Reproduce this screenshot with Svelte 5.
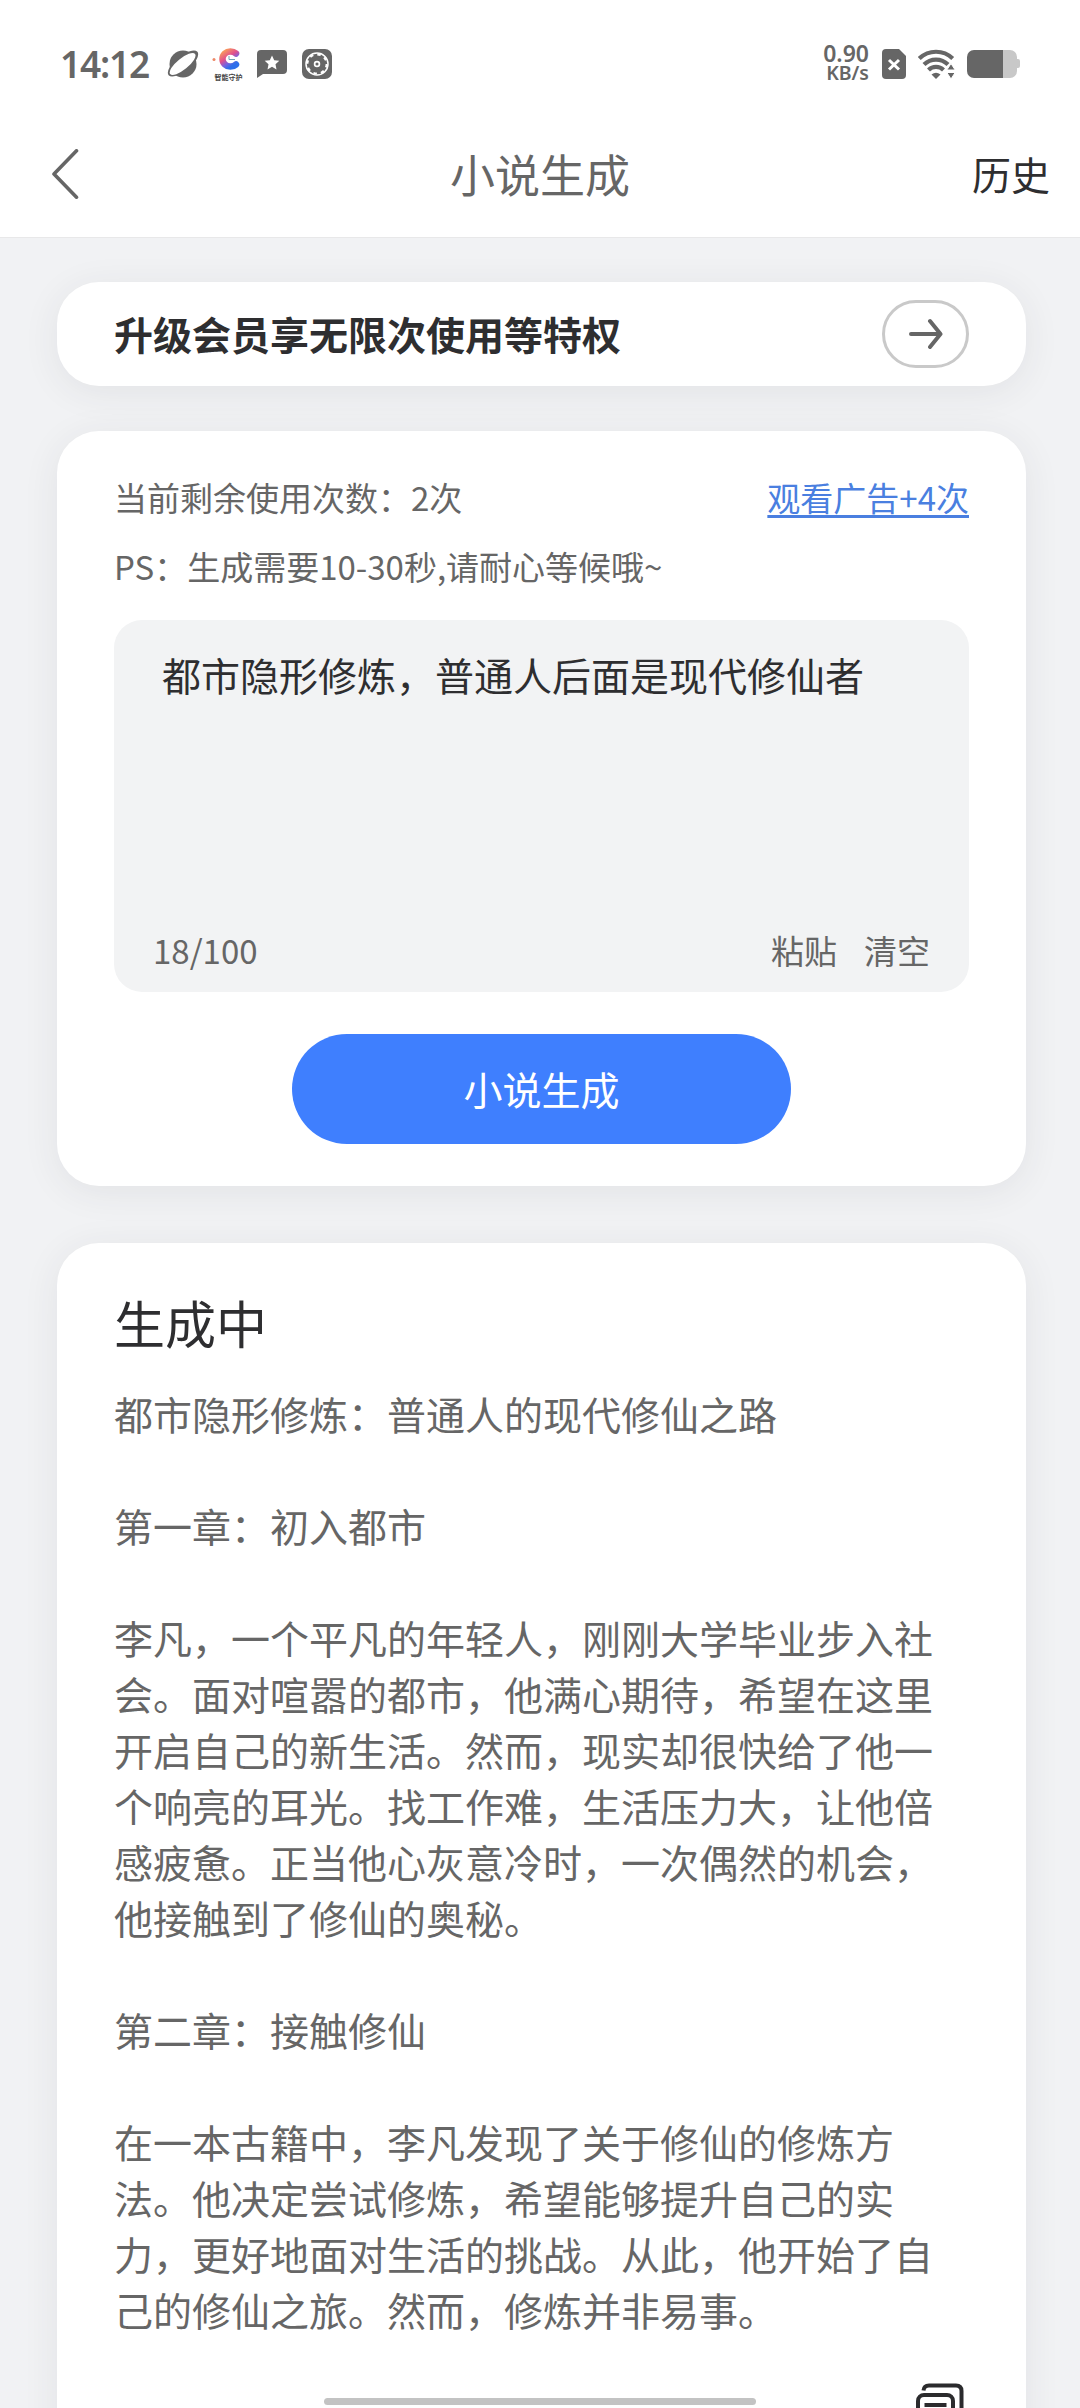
<script>
  let prompt = '都市隐形修炼，普通人后面是现代修仙者';
  let remaining = 2;
  const maxLength = 100;

  const story = [
    '都市隐形修炼：普通人的现代修仙之路',
    '第一章：初入都市',
    '李凡，一个平凡的年轻人，刚刚大学毕业步入社会。面对喧嚣的都市，他满心期待，希望在这里开启自己的新生活。然而，现实却很快给了他一个响亮的耳光。找工作难，生活压力大，让他倍感疲惫。正当他心灰意冷时，一次偶然的机会，他接触到了修仙的奥秘。',
    '第二章：接触修仙',
    '在一本古籍中，李凡发现了关于修仙的修炼方法。他决定尝试修炼，希望能够提升自己的实力，更好地面对生活的挑战。从此，他开始了自己的修仙之旅。然而，修炼并非易事。'
  ];

  const clearPrompt = () => {
    prompt = '';
  };
</script>

<div class="screen">
  <div class="status-bar">
    <div class="status-left">
      <span class="clock">14:12</span>
      <svg class="planet" width="32" height="30" viewBox="0 0 32 30">
        <circle cx="16" cy="15" r="13.500" fill="#666" />
        <ellipse cx="16" cy="14.500" rx="18.500" ry="7.500" transform="rotate(-39 16 14.500)" fill="#666" />
        <ellipse cx="15.600" cy="15" rx="16" ry="5.600" transform="rotate(-39 15.600 15)" fill="#fff" />
      </svg>
      <svg class="guard" width="32" height="34" viewBox="0 0 32 34">
        <defs>
          <linearGradient id="guardFill" x1="0" y1="0" x2="0.6" y2="1">
            <stop offset="0" stop-color="#f99a5c" />
            <stop offset="0.45" stop-color="#e2508c" />
            <stop offset="0.75" stop-color="#7a62dd" />
            <stop offset="1" stop-color="#2f6fea" />
          </linearGradient>
        </defs>
        <path d="M24 6.500A8 7.600 0 1 0 24 17.500" fill="none" stroke="url(#guardFill)" stroke-width="6.500" stroke-linecap="round" />
        <path d="M17 9v3.500h6" fill="none" stroke="#6fa3b5" stroke-width="1" />
        <circle cx="2" cy="12.500" r="1.500" fill="#ee8866" />
        <text x="2.500" y="32.500" textLength="28" lengthAdjust="spacingAndGlyphs">智能守护</text>
      </svg>
      <svg class="chat" width="30" height="28" viewBox="0 0 30 28">
        <path d="M4 0h22a4 4 0 0 1 4 4v16a4 4 0 0 1-4 4H6l-6 4V4a4 4 0 0 1 4-4z" fill="#666" />
        <path d="M15 5.500l2.200 4.700 5.100.6-3.800 3.500 1 5.100-4.500-2.600-4.500 2.600 1-5.100-3.800-3.500 5.100-.6z" fill="#fff" />
      </svg>
      <svg class="gear" width="30" height="30" viewBox="0 0 30 30">
        <rect width="30" height="30" rx="7" fill="#666" />
        <circle cx="15" cy="15" r="11" fill="none" stroke="#fff" stroke-width="1.500" />
        <circle cx="15" cy="15" r="9.600" fill="none" stroke="#fff" stroke-width="2" stroke-dasharray="3.500 4.040" />
        <circle cx="15" cy="15" r="2.400" fill="none" stroke="#fff" stroke-width="1.700" />
      </svg>
    </div>
    <div class="status-right">
      <div class="speed"><span class="rate">0.90</span><span class="unit">KB/s</span></div>
      <svg class="sim" width="24" height="30" viewBox="0 0 24 30">
        <path d="M4 0h13l7 7v19a4 4 0 0 1-4 4H4a4 4 0 0 1-4-4V4a4 4 0 0 1 4-4z" fill="#666" />
        <path d="M7 11l10 9.500M17 11l-10 9.500" stroke="#fff" stroke-width="3" />
      </svg>
      <svg class="wifi" width="38" height="30" viewBox="0 0 38 30">
        <g fill="none" stroke="#666" stroke-width="4.200">
          <path d="M1.300 9.500a24 24 0 0 1 33.400 0" />
          <path d="M6 15.500a17 17 0 0 1 24 0" />
          <path d="M10.500 21a10.800 10.800 0 0 1 15 0" />
        </g>
        <path d="M13.500 25.500q4.500-3.500 9 0L18 30z" fill="#666" />
        <path d="M33 14.500l4.200 6.500h-8.400zM33 30l4.200-6.500h-8.400z" fill="#666" stroke="#fff" stroke-width="1" />
      </svg>
      <svg class="battery" width="53" height="28" viewBox="0 0 53 28">
        <path d="M35 0h8a7 7 0 0 1 7 7v2h1a2 2 0 0 1 2 2v5a2 2 0 0 1-2 2h-1v3a7 7 0 0 1-7 7h-8z" fill="#c8c8c8" />
        <path d="M7 0h29v28H7a7 7 0 0 1-7-7V7a7 7 0 0 1 7-7z" fill="#666" />
      </svg>
    </div>
  </div>

  <header class="nav">
    <button class="back" aria-label="返回">
      <svg width="28" height="50" viewBox="0 0 28 50">
        <path d="M25.500 1.800L3 25l22.500 23.200" fill="none" stroke="#666" stroke-width="3.600" stroke-linecap="round" stroke-linejoin="round" />
      </svg>
    </button>
    <h1>小说生成</h1>
    <button class="history">历史</button>
  </header>

  <main>
    <section class="card vip">
      <span class="vip-text">升级会员享无限次使用等特权</span>
      <span class="vip-arrow">
        <svg width="34" height="32" viewBox="0 0 34 32">
          <path d="M2 16h29M21 3l10.500 13L21 29" fill="none" stroke="#666" stroke-width="4" stroke-linecap="round" stroke-linejoin="round" />
        </svg>
      </span>
    </section>

    <section class="card generator">
      <div class="quota">
        <span>当前剩余使用次数：{remaining}次</span>
        <span class="watch-ad">观看广告+4次</span>
      </div>
      <p class="hint">PS：生成需要10-30秒,请耐心等候哦~</p>
      <div class="prompt-box">
        <p class="prompt-text">{prompt}</p>
        <div class="prompt-footer">
          <span>{prompt.length}/{maxLength}</span>
          <div class="prompt-actions">
            <button>粘贴</button>
            <button on:click={clearPrompt}>清空</button>
          </div>
        </div>
      </div>
      <button class="generate">小说生成</button>
    </section>

    <section class="card result">
      <h2>生成中</h2>
      <div class="story">
        {#each story as paragraph}
          <p>{paragraph}</p>
        {/each}
      </div>
      <svg class="copy" width="48" height="54" viewBox="0 0 48 54">
        <g fill="none" stroke="#2b2b2d" stroke-width="4">
          <path d="M7.500 7.500Q8 2.500 13 2.500h27q5.500 0 5.500 5.500v33" />
          <rect x="2" y="12" width="35" height="40" rx="6" />
          <path d="M8.500 22h22" />
        </g>
      </svg>
    </section>
  </main>

  <div class="home-indicator"></div>
</div>

<style>
:global(body) {
  margin: 0;
  overflow: hidden;
}

.screen {
  position: relative;
  width: 1080px;
  height: 2408px;
  overflow: hidden;
  display: flex;
  flex-direction: column;
  background-color: #f1f2f4;
  color: #666;
  font-family: 'Noto Sans CJK SC', sans-serif;
}

h1, h2, p {
  margin: 0;
  font-weight: 400;
}

button {
  border: none;
  padding: 0;
  background: none;
  color: inherit;
  font: inherit;
}

svg {
  display: block;
  flex: none;
}

.status-bar {
  flex: none;
  height: 112px;
  padding: 16px 60px 0 60px;
  box-sizing: border-box;
  background-color: #fff;
  display: flex;
  justify-content: space-between;
  align-items: center;
}

.status-left, .status-right {
  display: flex;
  align-items: center;
}

.clock {
  width: 107px;
  font-family: 'Noto Sans', sans-serif;
  font-size: 37px;
  font-weight: 600;
  line-height: 40px;
  letter-spacing: -1.2px;
}

.guard {
  margin-left: 13px;
}

.guard text {
  font-size: 7px;
  font-weight: 700;
  fill: #444;
}

.chat {
  margin-left: 13px;
}

.gear {
  margin-left: 15px;
}

.speed {
  display: flex;
  flex-direction: column;
  align-items: flex-end;
  font-family: 'Noto Sans', sans-serif;
  font-weight: 600;
  padding-bottom: 2px;
}

.rate {
  font-size: 23px;
  line-height: 19px;
}

.unit {
  font-size: 19.500px;
  line-height: 19px;
}

.sim {
  margin-left: 13px;
}

.wifi {
  margin-left: 12px;
}

.battery {
  margin-left: 11px;
}

.nav {
  flex: none;
  height: 126px;
  padding: 0 30px 0 51px;
  box-sizing: border-box;
  border-bottom: 1px solid #e8e8e9;
  background-color: #fff;
  display: grid;
  grid-template-columns: 100px 1fr 121px;
  align-items: center;
}

.nav h1 {
  font-size: 45px;
  line-height: 60px;
  text-align: center;
  padding-bottom: 2px;
}

.back {
  padding-bottom: 2px;
}

.history {
  color: #2e2e30;
  font-size: 39px;
  line-height: 60px;
  text-align: right;
  padding-bottom: 4px;
}

main {
  flex: none;
  padding: 44px 54px 0 57px;
  display: flex;
  flex-direction: column;
}

.card {
  box-sizing: border-box;
  background-color: #fff;
  border-radius: 42px;
  box-shadow: 0 6px 36px rgba(50, 50, 60, 0.08);
  padding: 0 57px 0 57px;
}

.vip {
  height: 104px;
  display: flex;
  justify-content: space-between;
  align-items: center;
}

.vip-text {
  color: #2e2e30;
  font-size: 39px;
  font-weight: 700;
  line-height: 56px;
  padding-bottom: 3px;
}

.vip-arrow {
  width: 87px;
  height: 68px;
  box-sizing: border-box;
  border: 3px solid #c9c9c9;
  border-radius: 34px;
  display: flex;
  justify-content: center;
  align-items: center;
}

.generator {
  height: 755px;
  margin-top: 45px;
  padding-top: 42px;
  display: flex;
  flex-direction: column;
  font-size: 33px;
  line-height: 48px;
}

.quota {
  display: flex;
  justify-content: space-between;
}

.watch-ad {
  color: #4a7fe0;
  text-decoration: underline;
  text-decoration-thickness: 3px;
  text-underline-offset: 4px;
}

.hint {
  margin-top: 21px;
}

.prompt-box {
  height: 372px;
  margin-top: 30px;
  padding: 26px 39px 18px 39px;
  box-sizing: border-box;
  border-radius: 28px;
  background-color: #f2f3f4;
  display: flex;
  flex-direction: column;
  justify-content: space-between;
}

.prompt-text {
  color: #2e2e30;
  font-size: 39px;
  line-height: 56px;
  padding-left: 9px;
}

.prompt-footer {
  display: flex;
  justify-content: space-between;
}

.prompt-actions {
  display: flex;
  gap: 27px;
}

.generate {
  width: 499px;
  height: 110px;
  margin-top: 42px;
  padding-bottom: 2px;
  align-self: center;
  border-radius: 55px;
  background-color: #3f7ffe;
  color: #fff;
  font-size: 39px;
}

.result {
  height: 1300px;
  margin-top: 57px;
  padding-top: 42px;
  display: flex;
  flex-direction: column;
}

.result h2 {
  color: #2e2e30;
  font-size: 51px;
  line-height: 74px;
}

.story {
  margin-top: 26px;
  display: flex;
  flex-direction: column;
  gap: 56px;
  font-size: 39px;
  line-height: 56px;
}

.copy {
  margin: 46px 5px 0 0;
  align-self: flex-end;
}

.home-indicator {
  position: absolute;
  left: 324px;
  bottom: 3px;
  width: 432px;
  height: 7px;
  border-radius: 4px;
  background-color: #c3c3c3;
}
</style>
